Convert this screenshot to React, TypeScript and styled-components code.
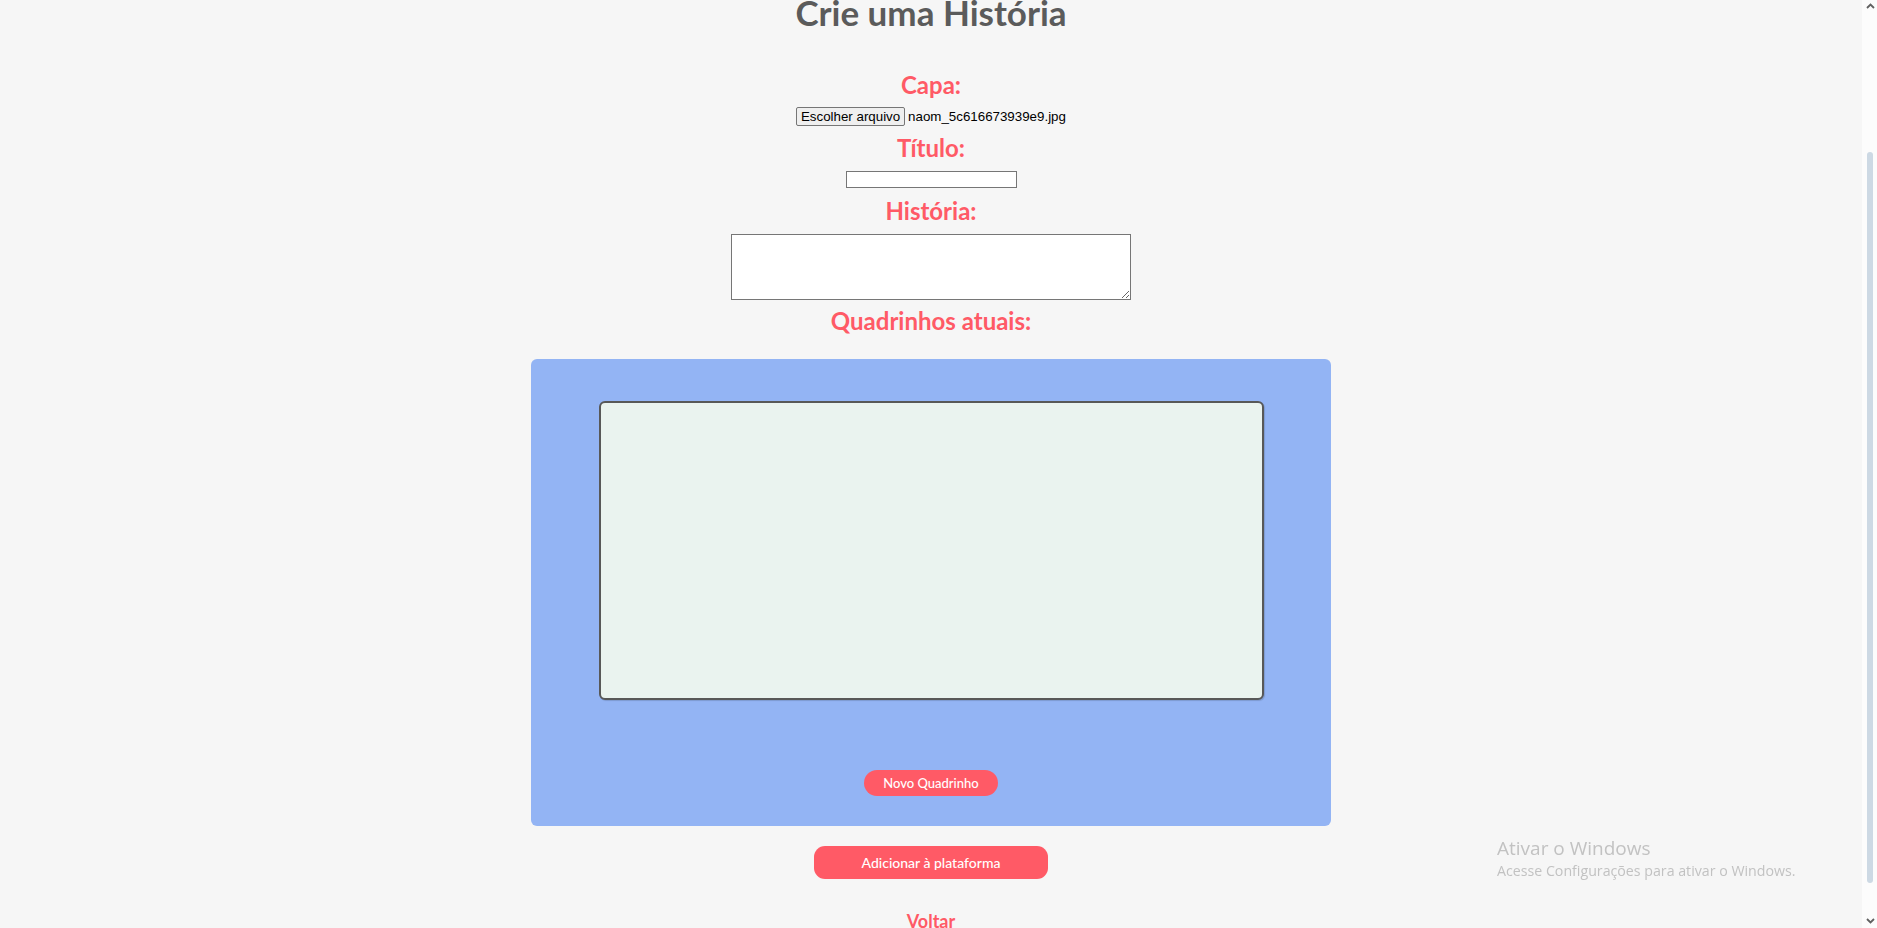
import React, { useLayoutEffect } from "react";
import styled, { createGlobalStyle } from "styled-components";

const Global = createGlobalStyle`
  html { background: #f6f6f6; }
  body { margin: 0; background: #f6f6f6; font-family: "Lato", "Noto Sans", sans-serif; }
  * { box-sizing: border-box; }
  html::-webkit-scrollbar { display: none; }
`;

const Page = styled.main`
  display: flex;
  flex-direction: column;
  align-items: center;
  padding: 163px 15px 31px 0;
`;

const Title = styled.h1`
  margin: 0 0 38px;
  font: 700 35px/40px "Lato", sans-serif;
  color: #5b5b5b;
`;

const Form = styled.form`
  display: flex;
  flex-direction: column;
  align-items: center;
`;

const Label = styled.label<{ $gap?: number }>`
  display: block;
  margin: 0 0 ${(p) => p.$gap ?? 8}px;
  font: 700 24px/30px "Lato", sans-serif;
  color: #ff5a66;
`;

const FileRow = styled.div`
  display: flex;
  align-items: center;
  gap: 3px;
  height: 19px;
  margin-bottom: 7px;
  font: 13.33px "Liberation Sans", Arial, sans-serif;
  color: #000;
`;

const FileButton = styled.label`
  display: flex;
  align-items: center;
  justify-content: center;
  width: 109px;
  height: 19px;
  background: #efefef;
  border: 1px solid #767676;
  border-radius: 2px;
  font: 13.33px "Liberation Sans", Arial, sans-serif;
  color: #000;
  input { display: none; }
`;

const TextInput = styled.input`
  width: 171px;
  height: 17px;
  margin: 0 0 8px;
  padding: 0 2px;
  border: 1px solid #767676;
  background: #fff;
  font: 13.33px "Liberation Sans", Arial, sans-serif;
`;

const TextArea = styled.textarea`
  display: block;
  width: 400px;
  height: 66px;
  margin: 0 0 6px;
  border: 1px solid #767676;
  background: #fff;
  font: 13.33px "Liberation Mono", monospace;
`;

const Panel = styled.section`
  width: 800px;
  height: 467px;
  margin-top: 15px;
  padding-top: 42px;
  display: flex;
  flex-direction: column;
  align-items: center;
  background: #93b4f4;
  border-radius: 6px;
`;

const Frame = styled.div`
  width: 665px;
  height: 299px;
  background: #eaf3ef;
  border: 2px solid #585858;
  border-radius: 6px;
  box-shadow: 1px 1px 1px rgba(0, 0, 0, 0.15);
`;

const PillButton = styled.button<{ $w: number; $h: number; $r: number; $fs: number }>`
  width: ${(p) => p.$w}px;
  height: ${(p) => p.$h}px;
  border: none;
  border-radius: ${(p) => p.$r}px;
  background: #ff5a66;
  color: #fff;
  font: 500 ${(p) => p.$fs}px "Lato", sans-serif;
  padding: 0;
  cursor: pointer;
`;

const NewButtonWrap = styled.div`
  margin-top: 70px;
`;

const AddWrap = styled.div`
  margin-top: 20px;
`;

const BackLink = styled.a`
  margin-top: 30px;
  font: 700 18px/24px "Lato", sans-serif;
  color: #ff5a66;
  text-decoration: none;
`;

const Watermark = styled.div`
  position: fixed;
  left: 1497px;
  top: 835px;
  color: #c2c2c2;
  font-family: "Open Sans", sans-serif;
  pointer-events: none;
`;

const WmTitle = styled.div`
  font-size: 19px;
  line-height: 26px;
`;

const WmSub = styled.div`
  font-size: 14.2px;
  line-height: 20px;
`;

const ScrollBar = styled.div`
  position: fixed;
  top: 0;
  right: 0;
  width: 15px;
  height: 100vh;
  background: #fcfcfc;
  display: flex;
  flex-direction: column;
  align-items: center;
  justify-content: space-between;
  padding: 3px 0 4px;
`;

const Thumb = styled.div`
  position: absolute;
  top: 152px;
  left: 5px;
  width: 6px;
  height: 731px;
  border-radius: 3px;
  background: #cdd9e4;
`;

const Arrow = ({ down }: { down?: boolean }) => (
  <svg width="9" height="6" viewBox="0 0 9 6" style={{ marginLeft: 1 }}>
    <path
      d={down ? "M1 1 L4.5 4.5 L8 1" : "M1 5 L4.5 1.5 L8 5"}
      fill="none"
      stroke="#606060"
      strokeWidth="1.8"
    />
  </svg>
);

export default function App() {
  useLayoutEffect(() => {
    window.scrollTo(0, 171);
  }, []);

  return (
    <>
      <Global />
      <Page>
        <Title>Crie uma História</Title>
        <Form onSubmit={(e) => e.preventDefault()}>
          <Label $gap={7}>Capa:</Label>
          <FileRow>
            <FileButton>
              Escolher arquivo
              <input type="file" />
            </FileButton>
            <span>naom_5c616673939e9.jpg</span>
          </FileRow>
          <Label htmlFor="titulo">Título:</Label>
          <TextInput id="titulo" type="text" />
          <Label htmlFor="historia">História:</Label>
          <TextArea id="historia" />
          <Label as="h2">Quadrinhos atuais:</Label>
          <Panel>
            <Frame />
            <NewButtonWrap>
              <PillButton type="button" $w={134} $h={26} $r={13} $fs={13}>
                Novo Quadrinho
              </PillButton>
            </NewButtonWrap>
          </Panel>
          <AddWrap>
            <PillButton type="submit" $w={234} $h={33} $r={11} $fs={14}>
              Adicionar à plataforma
            </PillButton>
          </AddWrap>
          <BackLink href="#">Voltar</BackLink>
        </Form>
      </Page>
      <Watermark>
        <WmTitle>Ativar o Windows</WmTitle>
        <WmSub>Acesse Configurações para ativar o Windows.</WmSub>
      </Watermark>
      <ScrollBar>
        <Arrow />
        <Thumb />
        <Arrow down />
      </ScrollBar>
    </>
  );
}
